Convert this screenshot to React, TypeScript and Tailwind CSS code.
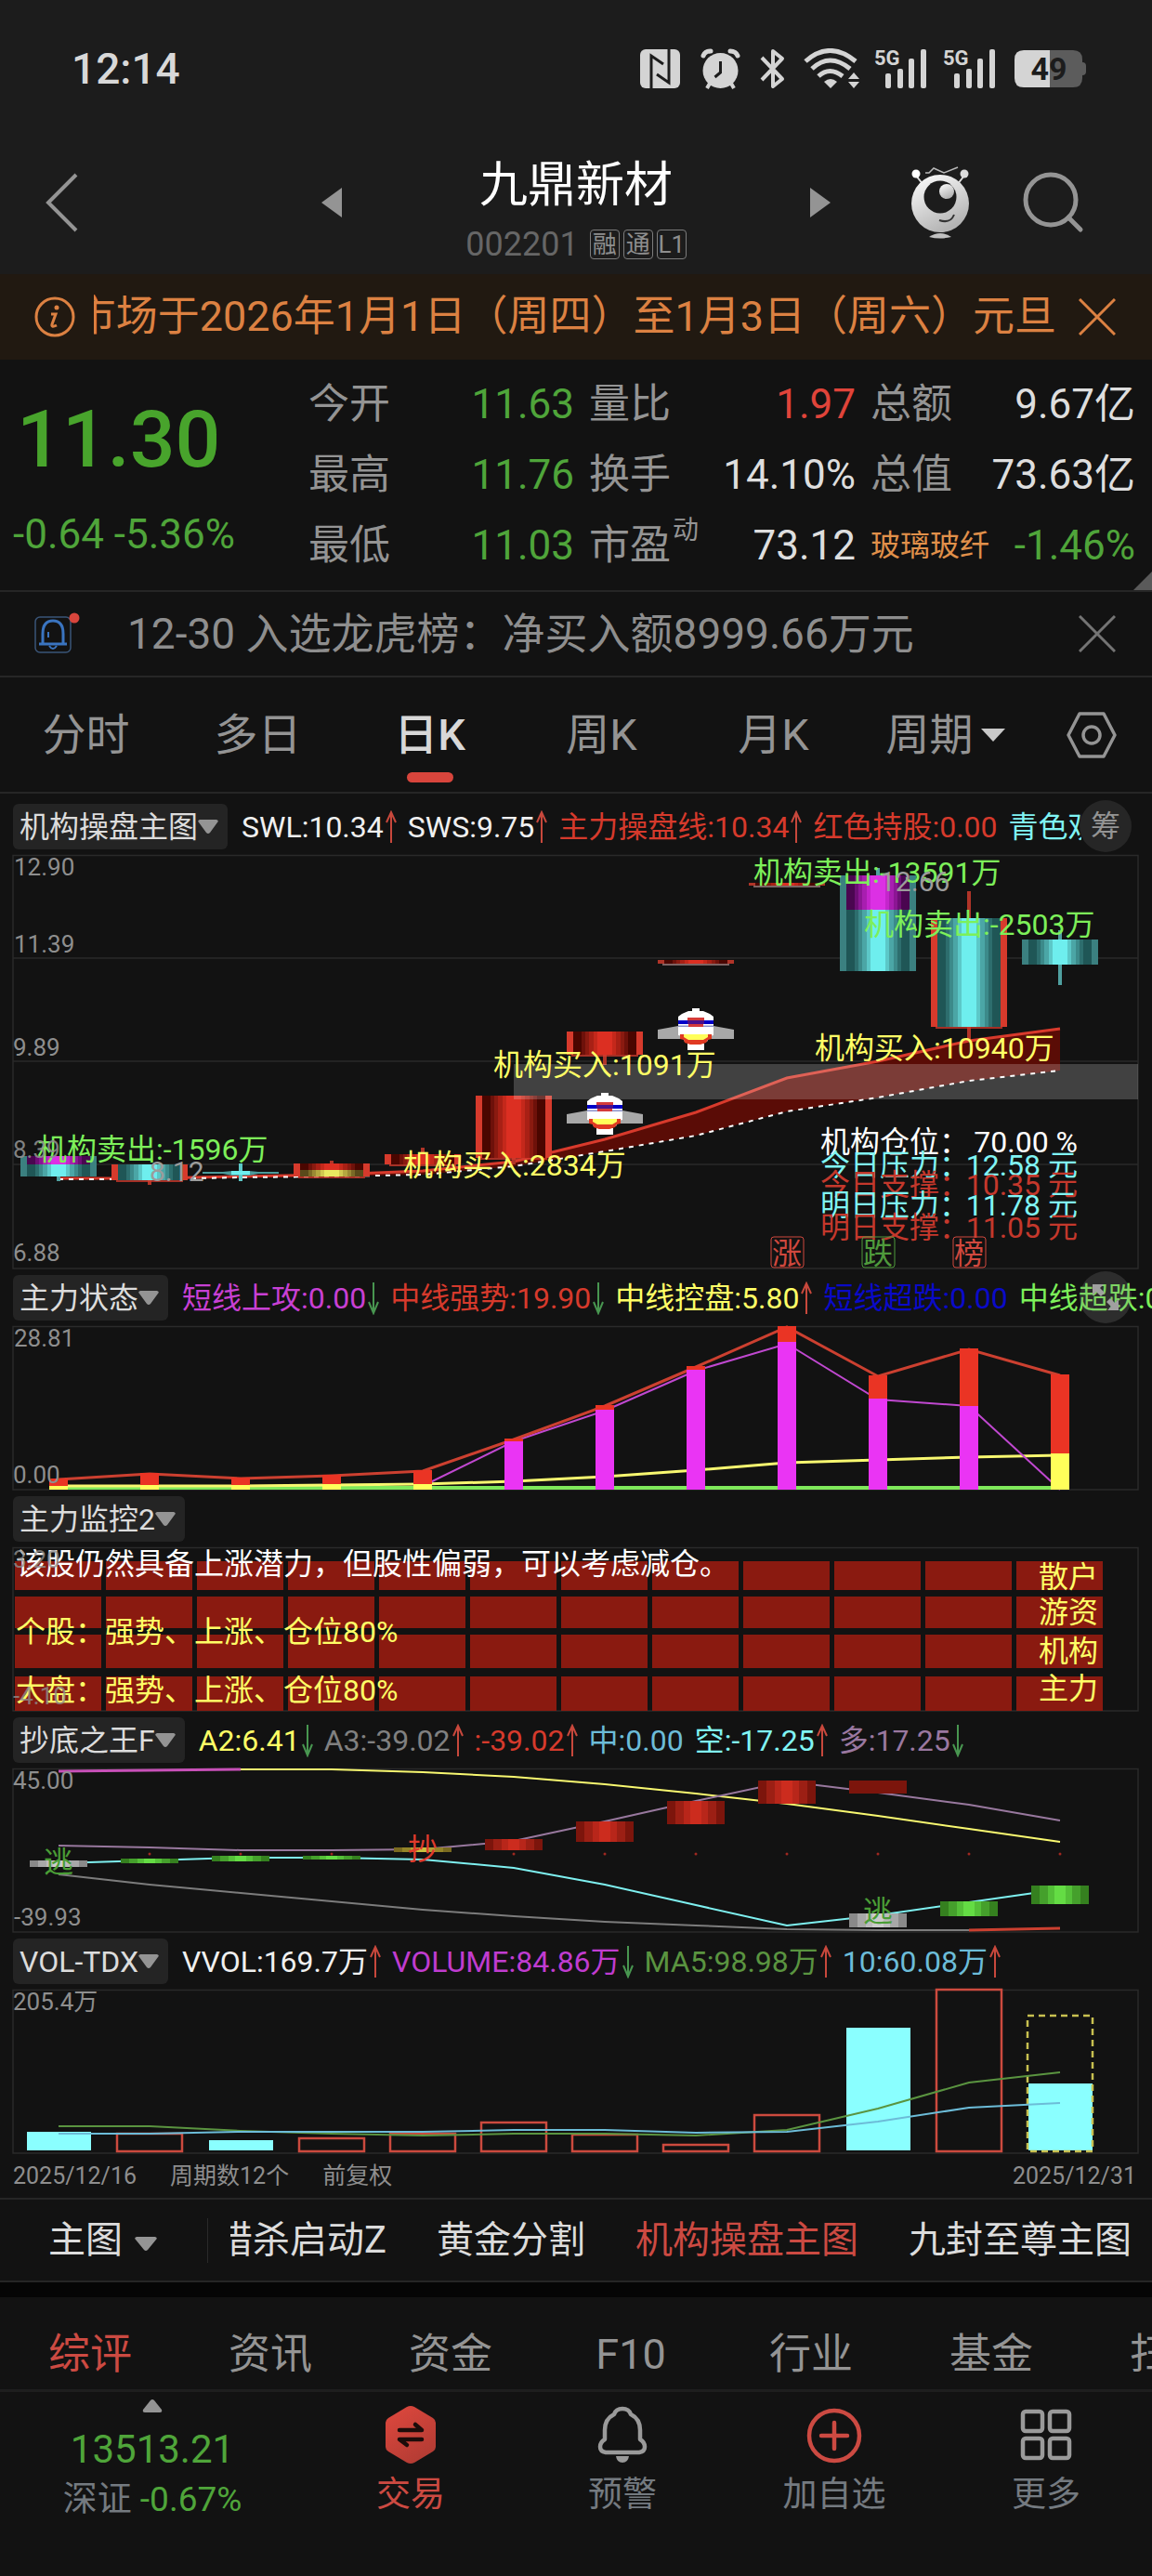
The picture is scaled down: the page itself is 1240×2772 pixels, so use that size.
import React from 'react';

const AXIS = '#8e8e8e';
const GRID = '#2a2a2a';
const LIME = '#7df05a';
const YELLOW = '#ffff66';
const CYAN = '#80f4f4';
const RED = '#d63a2c';

/* ---------- shared pieces ---------- */

const cx = (i: number) => 63 + 98 * i;
const path = (ys: number[], from = 0) => ys.map((y, i) => `${cx(i + from)},${y}`).join(' ');

function Label({ x, y, size = 32, fill = AXIS, anchor = 'start', opacity = 1, children }: {
  x: number; y: number; size?: number; fill?: string; anchor?: 'start' | 'middle' | 'end'; opacity?: number; children: React.ReactNode;
}) {
  return (
    <text x={x} y={y + Math.round(size * 0.36)} fontSize={size} fill={fill} textAnchor={anchor} opacity={opacity}>
      {children}
    </text>
  );
}

function Chart({ height, lines = [], title, children }: { height: number; lines?: number[]; title: string; children: React.ReactNode }) {
  return (
    <svg viewBox={`0 0 1240 ${height}`} className="block h-auto w-full overflow-visible" role="img" aria-label={title}>
      <rect x="14" y="0.5" width="1211" height={height - 1.5} fill="none" stroke={GRID} strokeWidth="1.5" />
      {lines.map((y) => <line key={y} x1="14" x2="1225" y1={y} y2={y} stroke={GRID} strokeWidth="1.5" />)}
      {children}
    </svg>
  );
}

function Trend({ up }: { up: boolean }) {
  return up ? (
    <svg viewBox="0 0 12 36" className="h-9 w-3 shrink-0" fill="none" stroke="#c8483c" strokeWidth="2" aria-label="上升">
      <path d="M6 35V2M1 13L6 2l5 11" />
    </svg>
  ) : (
    <svg viewBox="0 0 12 36" className="h-9 w-3 shrink-0" fill="none" stroke="#489650" strokeWidth="2" aria-label="下降">
      <path d="M6 1v33M1 22l5 12 5-12" />
    </svg>
  );
}

type Reading = { text: string; color: string; up?: boolean };

function PanelHeader({ name, readings, badge, clip }: { name: string; readings: Reading[]; badge?: React.ReactNode; clip?: boolean }) {
  return (
    <div className="relative flex h-[49px] items-center pl-[14px] text-[32px] leading-none whitespace-nowrap">
      <button type="button" className="flex h-full shrink-0 items-center rounded-md bg-[#242424] pr-[10px] pl-[7px] text-[#dcdcdc]">
        {name}
        <svg viewBox="0 0 22 16" className="h-4 w-[22px] shrink-0" fill="#949494"><path d="M2 0h18q3 1 1 3l-8 11q-2 2-4 0L1 3Q-1 1 2 0z" /></svg>
      </button>
      <div className={`ml-[15px] flex h-full min-w-0 flex-1 items-center gap-3 overflow-hidden ${clip ? 'mr-[76px]' : ''}`}>
        {readings.map((r) => (
          <span key={r.text} className="flex shrink-0 items-center gap-0.5" style={{ color: r.color }}>
            {r.text}
            {r.up !== undefined && <Trend up={r.up} />}
          </span>
        ))}
      </div>
      {badge}
    </div>
  );
}

/* ---------- main chart ---------- */

const SHADES: Record<string, string[]> = {
  red: ['#4a0600', '#6e110a', '#8a1a10', '#a82015', '#c4281b', '#dc2f22'],
  teal: ['#1f5656', '#2d6e6e', '#3c8a8a', '#4ba6a6', '#5cc8c8', '#6eeeee'],
  magenta: ['#4a0650', '#6e0e76', '#8c1694', '#a81eb0', '#c426cc', '#dc30e4'],
  olive: ['#5a4a1a', '#7a6a26', '#9a8a34', '#b4a840', '#d0c850', '#e8e860'],
};
const HALVES = [34, 25, 21, 17, 12, 8];

function Stripes({ i, top, bottom, tone }: { i: number; top: number; bottom: number; tone: string }) {
  return (
    <>
      {HALVES.map((h, k) => (
        <rect key={h} x={cx(i) - h} y={top} width={h * 2} height={bottom - top} fill={SHADES[tone][k]} />
      ))}
    </>
  );
}

type CandleData = {
  i: number; top: number; bottom: number; tone: string; edge: string;
  high?: number; low?: number; cap?: { to: number; tone: string };
};

const CANDLES: CandleData[] = [
  { i: 0, top: 324, bottom: 346, tone: 'teal', edge: '#3b8080', low: 351, cap: { to: 333, tone: 'magenta' } },
  { i: 1, top: 333, bottom: 350, tone: 'teal', edge: RED, low: 355 },
  { i: 3, top: 332, bottom: 346, tone: 'olive', edge: RED, high: 329, cap: { to: 339, tone: 'red' } },
  { i: 4, top: 322, bottom: 333, tone: 'red', edge: RED, high: 315 },
  { i: 5, top: 259, bottom: 326, tone: 'red', edge: RED, low: 333 },
  { i: 6, top: 190, bottom: 215, tone: 'red', edge: RED, low: 226 },
  { i: 7, top: 113, bottom: 117, tone: 'red', edge: '#b03428' },
  { i: 8, top: 30, bottom: 33, tone: 'red', edge: '#b03428' },
  { i: 9, top: 22, bottom: 125, tone: 'teal', edge: '#3b8080', high: 14, cap: { to: 59, tone: 'magenta' } },
  { i: 10, top: 68, bottom: 185, tone: 'teal', edge: RED, high: 39, low: 198 },
  { i: 11, top: 91, bottom: 118, tone: 'teal', edge: '#3b8080', high: 81, low: 140 },
];

function Candle(c: CandleData) {
  const wick = c.edge === '#3b8080' ? '#4fa0a0' : '#b03428';
  return (
    <g>
      {c.high !== undefined && <rect x={cx(c.i) - 2} y={c.high} width="4" height={c.top - c.high} fill={wick} />}
      {c.low !== undefined && <rect x={cx(c.i) - 2} y={c.bottom} width="4" height={c.low - c.bottom} fill={wick} />}
      <rect x={cx(c.i) - 41} y={c.top} width="82" height={c.bottom - c.top} fill={c.edge} />
      <Stripes i={c.i} top={c.top} bottom={c.bottom} tone={c.tone} />
      {c.cap && <Stripes i={c.i} top={c.top} bottom={c.cap.to} tone={c.cap.tone} />}
      {c.edge !== '#3b8080' && (
        <line x1={cx(c.i) - 36} x2={cx(c.i) + 36} y1={c.bottom + 1} y2={c.bottom + 1} stroke={c.bottom - c.top < 6 ? '#a08080' : RED} strokeWidth="1.5" />
      )}
    </g>
  );
}

function Ship({ x, y }: { x: number; y: number }) {
  return (
    <g transform={`translate(${x} ${y})`}>
      <path d="M-19 19l-22 4v10h82V23l-22-4z" fill="#a8a8a8" />
      <path d="M-4 0h8v3h4l7 3 4 3v20l-4 1-3 6h-24l-3-6-4-1V9l4-3 7-3h4z" fill="#fff" />
      <path d="M-9 38H9v7H-9z" fill="#fff" />
      <path d="M-9 10H9v3H-9z" fill="#d43a3a" />
      <path d="M-19 13h38v4h-38z" fill="#0000c8" />
      <path d="M-9 13H9v4H-9z" fill="#4a108a" />
      <path d="M-19 18.500h38v1.500h-38z" fill="#8a90c8" />
      <path d="M-8 17H8v3H-8z" fill="#d43a3a" />
      <path d="M-17 28h34v5l-4 1-2 3-6 2H-6l-6-2-1-3-4-1z" fill="#e03a22" />
      <path d="M-13 28h26v3l-5 3H-8l-5-3z" fill="#ffff5a" />
    </g>
  );
}

const LEAD = [348, 348, 346, 344, 340, 330, 306, 277, 240, 222, 200, 187];
const BASE = [349, 349, 347, 346, 344, 335, 319, 302, 276, 261, 243, 232];

const INFO = [
  { y: 308, name: '机构仓位', value: '70.00 %', color: '#ffffff' },
  { y: 333, name: '今日压力', value: '12.58 元', color: CYAN },
  { y: 354, name: '今日支撑', value: '10.35 元', color: '#c4382c' },
  { y: 376, name: '明日压力', value: '11.78 元', color: CYAN },
  { y: 400, name: '明日支撑', value: '11.05 元', color: '#c4382c' },
];

function MainChart() {
  return (
    <Chart height={446} lines={[111, 222, 333]} title="机构操盘主图">
      <Label x={15} y={13} size={26}>12.90</Label>
      <Label x={15} y={96} size={26}>11.39</Label>
      <Label x={14} y={207} size={26}>9.89</Label>
      <Label x={14} y={428} size={26}>6.88</Label>
      <polygon points={`${path(LEAD)} ${path([...BASE]).split(' ').reverse().join(' ')}`} fill="#5a0c06" />
      <polyline points={path(LEAD)} fill="none" stroke="#d83a2c" strokeWidth="3" />
      <polyline points={path(BASE)} fill="none" stroke="#fff" strokeWidth="2" strokeDasharray="5 6" />
      {CANDLES.map((c) => <Candle key={c.i} {...c} />)}
      <path d="M218 341h22l10-1h18l10 1h22v2h-22l-10 2h-18l-10-2h-22z" fill="#4b9a9a" />
      <path d="M257 332h4v19h-4z" fill="#5cc8c8" />
      <path d="M249 340h20v4h-20z" fill="#6eeeee" />
      <rect x="553" y="225" width="672" height="38" fill="#fff" opacity="0.2" />
      <Ship x={651} y={256} />
      <Ship x={749} y={165} />
      <Label x={40} y={316} fill={LIME}>机构卖出:-1596万</Label>
      <Label x={14} y={317} size={26} opacity={0.9}>8.39</Label>
      <Label x={161} y={340} size={30} fill="#9c9c9c">8.12</Label>
      <Label x={434} y={333} fill={YELLOW}>机构买入:2834万</Label>
      <Label x={531} y={225} fill={YELLOW}>机构买入:1091万</Label>
      <Label x={811} y={18} fill={LIME}>机构卖出:-13591万</Label>
      <Label x={947} y={28} size={30} fill="#9c9c9c">12.66</Label>
      <Label x={930} y={74} fill={LIME}>机构卖出:-2503万</Label>
      <Label x={877} y={207} fill={YELLOW}>机构买入:10940万</Label>
      {INFO.map((r) => (
        <g key={r.name}>
          <Label x={883} y={r.y} fill={r.color}>{r.name}：</Label>
          <Label x={1160} y={r.y} fill={r.color} anchor="end">{r.value}</Label>
        </g>
      ))}
      {[
        { i: 8, t: '涨', c: '#d0483e' },
        { i: 9, t: '跌', c: '#4f9a3c' },
        { i: 10, t: '榜', c: '#d0483e' },
      ].map((m) => (
        <g key={m.t}>
          <rect x={cx(m.i) - 17} y="411" width="35" height="33" rx="3" fill="none" stroke={m.c} strokeWidth="1" />
          <Label x={cx(m.i)} y={428} fill={m.c} anchor="middle">{m.t}</Label>
        </g>
      ))}
    </Chart>
  );
}

/* ---------- strength chart ---------- */

const STRENGTH = [
  { top: 164, mid: 172, base: '#ffff5a' }, { top: 158, mid: 171, base: '#ffff5a' }, { top: 163, mid: 171, base: '#ffff5a' },
  { top: 160, mid: 170, base: '#ffff5a' }, { top: 155, mid: 170, base: '#ffff5a' }, { top: 121, mid: 124, base: '#ea34f4' },
  { top: 85, mid: 90, base: '#ea34f4' }, { top: 43, mid: 47, base: '#ea34f4' }, { top: 0, mid: 17, base: '#ea34f4' },
  { top: 53, mid: 78, base: '#ea34f4' }, { top: 24, mid: 86, base: '#ea34f4' }, { top: 52, mid: 137, base: '#ffff5a' },
];

function StrengthChart() {
  return (
    <Chart height={177} title="主力状态">
      <polyline points="63,174 1141,174" stroke="#7fe85a" strokeWidth="4" />
      <polyline points={path([172, 172, 172, 171, 170, 167, 162, 155, 147, 144, 141, 139])} fill="none" stroke="#f8f870" strokeWidth="3" />
      <polyline points={path([172, 124, 91, 48, 19, 79, 86, 176], 4)} fill="none" stroke="#c048d0" strokeWidth="2" />
      <polyline points={path([165, 159, 164, 161, 156, 122, 86, 44, 1, 54, 25, 53])} fill="none" stroke="#cc4030" strokeWidth="3" />
      {STRENGTH.map((b, i) => (
        <g key={i}>
          <rect x={cx(i) - 10} y={b.top} width="20" height={b.mid - b.top} fill="#ea3424" />
          <rect x={cx(i) - 10} y={b.mid} width="20" height={176 - b.mid} fill={b.base} />
        </g>
      ))}
      <Label x={15} y={13} size={26}>28.81</Label>
      <Label x={14} y={160} size={26}>0.00</Label>
    </Chart>
  );
}

/* ---------- monitor chart ---------- */

const BANDS = [[15, 31], [53, 34], [94, 36], [139, 37]];

function MonitorChart() {
  return (
    <Chart height={177} title="主力监控">
      {BANDS.map(([y, h]) => Array.from({ length: 12 }, (_, i) => (
        <rect key={`${y}-${i}`} x={16 + 98 * i} y={y} width="93" height={h} fill="#8a1a10" />
      )))}
      <Label x={17} y={17} fill="#fff">该股仍然具备上涨潜力，但股性偏弱，可以考虑减仓。</Label>
      <Label x={17} y={90} fill={YELLOW}>个股：强势、上涨、仓位80%</Label>
      <Label x={17} y={153} fill={YELLOW}>大盘：强势、上涨、仓位80%</Label>
      <Label x={1118} y={31} fill={YELLOW}>散户</Label>
      <Label x={1118} y={69} fill={YELLOW}>游资</Label>
      <Label x={1118} y={111} fill={YELLOW}>机构</Label>
      <Label x={1118} y={151} fill={YELLOW}>主力</Label>
      <Label x={14} y={13} size={26} opacity={0.8}>3.20</Label>
      <Label x={14} y={160} size={26} opacity={0.8}>-4.10</Label>
    </Chart>
  );
}

/* ---------- bottom-fishing chart ---------- */

const BLOCK_TONES: Record<string, string[]> = {
  gray: ['#8a8a8a', '#a8a8a8', '#bcbcbc', '#cccccc'],
  green: ['#35801f', '#45a02c', '#54c038', '#64dc44'],
  olive: ['#7a6a20', '#948428', '#b0a034', '#c8c040'],
  red: ['#7c150c', '#9c1f14', '#b8261a', '#cc2c1e'],
  dark: ['#7c150c', '#7c150c', '#7c150c', '#7c150c'],
};

const BLOCKS: [number, number, number, string][] = [
  [0, 99, 106, 'gray'], [1, 97, 102, 'green'], [2, 94, 100, 'green'], [3, 94, 98, 'green'], [4, 85, 90, 'olive'],
  [5, 76, 88, 'red'], [6, 57, 79, 'red'], [7, 35, 60, 'red'], [8, 13, 38, 'red'], [9, 13, 27, 'dark'],
  [9, 156, 171, 'gray'], [10, 143, 159, 'green'], [11, 126, 146, 'green'],
];

function FishingChart() {
  return (
    <Chart height={177} title="抄底之王">
      <polyline points={path([114, 125, 134, 143, 152, 159, 165, 169, 173, 174, 174])} fill="none" stroke="#7c7c7c" strokeWidth="2" />
      <polyline points={path([174, 172], 10)} fill="none" stroke="#cc4030" strokeWidth="3" />
      <polyline points={path([1, 1, 4, 9, 17, 27, 38, 51, 65, 79], 2)} fill="none" stroke="#f8f870" strokeWidth="2" />
      <polyline points={path([3, 2, 1])} fill="none" stroke="#c850b8" strokeWidth="3" />
      <polyline points={path([83, 85, 88, 88, 87, 78, 57, 35, 14, 26, 39, 56])} fill="none" stroke="#98789e" strokeWidth="2" />
      <polyline points={path([102, 99, 96, 96, 98, 107, 125, 147, 169, 158, 144, 130])} fill="none" stroke="#7ef0f0" strokeWidth="2" />
      {BLOCKS.map(([i, top, bottom, tone], k) => (
        <g key={k}>
          {[31, 22, 13, 6].map((h, s) => (
            <rect key={h} x={cx(i) - h} y={top} width={h * 2} height={bottom - top} fill={BLOCK_TONES[tone][s]} />
          ))}
        </g>
      ))}
      {[1, 2, 3, 5, 6, 7, 8, 9, 10, 11].map((i) => <circle key={i} cx={cx(i)} cy="92" r="1.500" fill="#a02820" />)}
      <Label x={63} y={100} fill="#4a9e36" anchor="middle">逃</Label>
      <Label x={455} y={86} fill="#e03a2c" anchor="middle">抄</Label>
      <Label x={945} y={153} fill="#4a9e36" anchor="middle">逃</Label>
      <Label x={14} y={13} size={26}>45.00</Label>
      <Label x={15} y={160} size={26}>-39.93</Label>
    </Chart>
  );
}

/* ---------- volume chart ---------- */

const VOLUMES = [
  { y: 153, fill: true }, { y: 155 }, { y: 162, fill: true }, { y: 160 }, { y: 155 }, { y: 143 },
  { y: 156 }, { y: 167 }, { y: 135 }, { y: 41, fill: true }, { y: 0 }, { y: 101, fill: true },
];

function VolumeChart() {
  return (
    <Chart height={177} title="成交量">
      {VOLUMES.map((v, i) => v.fill
        ? <rect key={i} x={cx(i) - 34} y={v.y} width="69" height={173 - v.y} fill="#8affff" />
        : <rect key={i} x={cx(i) - 35} y={v.y} width="70" height={174 - v.y} fill="none" stroke="#cc4a3e" strokeWidth="2.500" />)}
      <rect x={cx(11) - 35} y="28" width="70" height="146" fill="none" stroke="#c8c050" strokeWidth="2.500" strokeDasharray="7 5" />
      <polyline points={path([147, 147, 152, 155, 157, 155, 155, 157, 151, 128, 100, 89])} fill="none" stroke="#5a9440" strokeWidth="2" />
      <polyline points={path([155, 155, 153, 153, 153, 151, 151, 154, 153, 142, 127, 122])} fill="none" stroke="#6cbcd8" strokeWidth="2" />
      <Label x={14} y={13} size={26}>205.4万</Label>
    </Chart>
  );
}

/* ---------- status bar icons ---------- */

function Signal() {
  return (
    <svg viewBox="0 0 58 44" className="h-11 w-[58px] overflow-visible" fill="#d4d4d4" aria-label="5G 信号">
      <text x="0" y="18" fontSize="22" fontWeight="700">5G</text>
      <rect x="12" y="27" width="6" height="16" rx="2" />
      <rect x="25" y="22" width="6" height="21" rx="2" />
      <rect x="37" y="11" width="6" height="32" rx="2" />
      <rect x="50" y="1" width="6" height="42" rx="2" />
    </svg>
  );
}

function StatusBar() {
  return (
    <div className="flex h-[148px] items-center justify-between pr-[71px] pl-[77px]">
      <time className="text-[46px] leading-none font-medium text-[#d8d8d8]">12:14</time>
      <div className="flex items-center">
        <svg viewBox="0 0 43 42" className="mr-[22px] h-[42px] w-[43px]" aria-label="NFC">
          <rect width="43" height="42" rx="6" fill="#d4d4d4" />
          <path d="M12 42V7l13 9M31 0v36L18 27" fill="none" stroke="#1c1c1c" strokeWidth="3" />
        </svg>
        <svg viewBox="0 0 43 44" className="mr-[21px] h-11 w-[43px]" aria-label="闹钟">
          <path d="M3 8Q5 3 11 3M32 3q6 0 8 5" fill="none" stroke="#d4d4d4" strokeWidth="5" strokeLinecap="round" />
          <path d="M11 36l-4 7M32 36l4 7" stroke="#d4d4d4" strokeWidth="4" />
          <circle cx="21.500" cy="24" r="19" fill="#d4d4d4" />
          <path d="M21.500 14v12l-6 5" fill="none" stroke="#1c1c1c" strokeWidth="3" />
        </svg>
        <svg viewBox="0 0 27 44" className="mr-5 h-11 w-[27px]" fill="none" stroke="#d4d4d4" strokeWidth="4" aria-label="蓝牙">
          <path d="M2 10l22 23-10 8V3l10 8L2 34" strokeLinejoin="round" />
        </svg>
        <svg viewBox="0 0 60 44" className="mr-4 h-11 w-[60px]" aria-label="无线网络">
          <g fill="none" stroke="#d4d4d4" strokeWidth="5">
            <path d="M2 14Q28-9 56 14" /><path d="M9 22Q28 4 50 22" /><path d="M16 30q12-11 26 0" />
          </g>
          <path d="M22 36q7-6 14 0l-7 7z" fill="#d4d4d4" />
          <path d="M48 33l6-7 6 7zM48 36h12l-6 7z" fill="#d4d4d4" />
        </svg>
        <div className="mr-4"><Signal /></div>
        <div className="mr-[19px]"><Signal /></div>
        <svg viewBox="0 0 77 40" className="h-10 w-[77px]" aria-label="电量 49%">
          <path d="M38 0h25q10 0 10 10v3q4 0 4 4v6q0 4-4 4v3q0 10-10 10H38z" fill="#5c5c5c" />
          <path d="M10 0h28v40H10Q0 40 0 30V10Q0 0 10 0z" fill="#d4d4d4" />
          <text x="37" y="32" fontSize="34" fontWeight="700" fill="#1c1c1c" textAnchor="middle">49</text>
        </svg>
      </div>
    </div>
  );
}

/* ---------- header ---------- */

function TitleBar() {
  return (
    <div className="grid h-[147px] grid-cols-[1fr_504px_1fr] items-center pb-2">
      <div className="flex items-center justify-between pl-12">
        <button type="button" aria-label="返回">
          <svg viewBox="0 0 36 64" className="h-16 w-9" fill="none" stroke="#949494" strokeWidth="4"><path d="M34 2L4 32l30 30" /></svg>
        </button>
        <button type="button" aria-label="上一只">
          <svg viewBox="0 0 22 32" className="h-8 w-[22px]" fill="#949494"><path d="M22 0v32L0 16z" /></svg>
        </button>
      </div>
      <div className="mt-4 flex flex-col items-center gap-[18px]">
        <h1 className="text-[52px] leading-[56px] text-white">九鼎新材</h1>
        <div className="flex h-[34px] items-center gap-1 text-[26px] leading-none text-[#8e8e8e]">
          <span className="mr-2 text-[36px] text-[#666666]">002201</span>
          {['融', '通', 'L1'].map((t) => (
            <span key={t} className="flex size-8 items-center justify-center rounded border border-[#7c7c7c]">{t}</span>
          ))}
        </div>
      </div>
      <div className="flex items-center justify-between pr-[73px]">
        <button type="button" aria-label="下一只">
          <svg viewBox="0 0 22 32" className="h-8 w-[22px]" fill="#949494"><path d="M0 0v32l22-16z" /></svg>
        </button>
        <div className="flex items-center gap-[57px]">
          <button type="button" aria-label="智能助手">
            <svg viewBox="0 0 64 78" className="h-[78px] w-16">
              <defs>
                <linearGradient id="bot" x1="0" y1="0" x2="0.5" y2="1"><stop offset="0" stopColor="#fff" /><stop offset="1" stopColor="#b4b4b4" /></linearGradient>
              </defs>
              <path d="M16 7h4l5-5 11 5L51 1" fill="none" stroke="#b8b8b8" strokeWidth="1.500" />
              <path d="M6 10l8 10M58 10l-8 10" stroke="#e0e0e0" strokeWidth="2" />
              <circle cx="6" cy="8" r="4.500" fill="#fff" />
              <circle cx="58" cy="8" r="4.500" fill="#ddd" />
              <circle cx="32" cy="40" r="31" fill="url(#bot)" />
              <circle cx="32" cy="33" r="17.500" fill="#1c1c1c" />
              <circle cx="39" cy="27" r="8" fill="url(#bot)" />
              <path d="M31 58q12 4 16-6" fill="none" stroke="#333" strokeWidth="2" />
              <path d="M20 76q12-8 24 0-12 3-24 0z" fill="#c0c0c0" />
            </svg>
          </button>
          <button type="button" aria-label="搜索">
            <svg viewBox="0 0 66 66" className="size-[66px]" fill="none" stroke="#949494" strokeWidth="5">
              <circle cx="30" cy="30" r="27" /><path d="M49 49l13 13" strokeLinecap="round" />
            </svg>
          </button>
        </div>
      </div>
    </div>
  );
}

function Close({ className }: { className: string }) {
  return (
    <button type="button" aria-label="关闭" className={className}>
      <svg viewBox="0 0 40 40" className="size-10" fill="none" stroke="currentColor" strokeWidth="3"><path d="M1 1l38 38M39 1L1 39" /></svg>
    </button>
  );
}

/* ---------- quote ---------- */

const QUOTES: { label: React.ReactNode; value: string; tone: string; small?: boolean }[][] = [
  [
    { label: '今开', value: '11.63', tone: 'text-[#4fa53a]' },
    { label: '最高', value: '11.76', tone: 'text-[#4fa53a]' },
    { label: '最低', value: '11.03', tone: 'text-[#4fa53a]' },
  ],
  [
    { label: '量比', value: '1.97', tone: 'text-[#e0443a]' },
    { label: '换手', value: '14.10%', tone: 'text-[#dedede]' },
    { label: <>市盈<sup className="-top-2 ml-0.5 self-start text-[28px] leading-none">动</sup></>, value: '73.12', tone: 'text-[#dedede]' },
  ],
  [
    { label: '总额', value: '9.67亿', tone: 'text-[#dedede]' },
    { label: '总值', value: '73.63亿', tone: 'text-[#dedede]' },
    { label: '玻璃玻纤', value: '-1.46%', tone: 'text-[#4fa53a]', small: true },
  ],
];

function Quote() {
  return (
    <section className="relative grid grid-cols-[332fr_302fr_303fr_303fr] items-center border-b-2 border-[#262626] pt-2.5 pb-2.5 text-[#4fa53a]">
      <div className="flex flex-col gap-8 whitespace-nowrap">
        <strong className="pl-[18px] text-[86px] leading-[96px] font-medium text-[#48a42c]">11.30</strong>
        <p className="pl-[14px] text-[44px] leading-[44px]">-0.64 -5.36%</p>
      </div>
      {QUOTES.map((col, i) => (
        <dl key={i} className={i === 2 ? 'pr-[18px]' : 'pr-[16px]'}>
          {col.map((q) => (
            <div key={q.value} className="flex h-[76px] items-center justify-between text-[44px] leading-none whitespace-nowrap">
              <dt className={q.small ? 'text-[32px] text-[#e0904a]' : 'flex text-[#949494]'}>{q.label}</dt>
              <dd className={q.tone}>{q.value}</dd>
            </div>
          ))}
        </dl>
      ))}
      <span className="absolute right-0 bottom-0 size-5 bg-[#5a5a5a] [clip-path:polygon(100%_0,100%_100%,0_100%)]" />
    </section>
  );
}

/* ---------- period tabs ---------- */

const PERIODS = ['分时', '多日', '日K', '周K', '月K'];

function PeriodTabs() {
  return (
    <nav className="grid h-[125px] grid-cols-[repeat(6,185fr)_130fr] border-b-2 border-[#262626] text-[47px] leading-none text-[#949494]">
      {PERIODS.map((p) => (
        <button key={p} type="button" className={p === '日K' ? 'relative font-medium text-[#d8d8d8]' : 'relative'}>
          {p}
          {p === '日K' && <span className="absolute bottom-[10px] left-1/2 h-[11px] w-[50px] -translate-x-1/2 rounded-full bg-[#d8453c]" />}
        </button>
      ))}
      <button type="button" className="flex items-center justify-center gap-2">
        周期
        <svg viewBox="0 0 26 14" className="h-3.5 w-[26px]" fill="#c8c8c8"><path d="M0 0h26L13 14z" /></svg>
      </button>
      <button type="button" aria-label="设置" className="flex items-center justify-center">
        <svg viewBox="0 0 54 50" className="h-[50px] w-[54px]" fill="none" stroke="#949494" strokeWidth="3.500">
          <path d="M14 2h26l12 23-12 23H14L2 25z" strokeLinejoin="round" /><circle cx="27" cy="25" r="9" />
        </svg>
      </button>
    </nav>
  );
}

/* ---------- bottom navigation ---------- */

function NavItem({ label, active, children }: { label: string; active?: boolean; children: React.ReactNode }) {
  return (
    <button type="button" className={`flex flex-col items-center gap-3 pt-[15px] text-[37px] leading-[44px] ${active ? 'text-[#cc4a42]' : 'text-[#747a80]'}`}>
      <svg viewBox="0 0 62 62" className="size-[62px]">{children}</svg>
      {label}
    </button>
  );
}

function BottomNav() {
  return (
    <nav className="grid grid-cols-[328fr_228fr_228fr_228fr_228fr] items-start border-t-[3px] border-[#1e1e1e]">
      <button type="button" className="flex flex-col items-center pt-2 text-[#4fa53a]">
        <svg viewBox="0 0 22 14" className="h-3.5 w-[22px]" fill="#949494"><path d="M11 0q1 0 2 1l8 10q1 3-2 3H3q-3 0-2-3L9 1q1-1 2-1z" /></svg>
        <span className="mt-4 text-[42px] leading-[48px]">13513.21</span>
        <span className="mt-2 text-[37px] leading-[44px]"><span className="text-[#747a80]">深证 </span>-0.67%</span>
      </button>
      <NavItem label="交易" active>
        <defs>
          <linearGradient id="trade" x1="0" y1="0" x2="0.6" y2="1"><stop offset="0" stopColor="#e0483e" /><stop offset="1" stopColor="#b43c34" /></linearGradient>
        </defs>
        <path d="M27 1q4-2 8 0l20 12q3 2 3 5v26q0 3-3 5L35 61q-4 2-8 0L7 49q-3-2-3-5V18q0-3 3-5z" fill="url(#trade)" />
        <path d="M19 26h24L36 20M43 36H19l8 6" fill="none" stroke="#1c0c0a" strokeWidth="4.500" strokeLinecap="round" strokeLinejoin="round" />
      </NavItem>
      <NavItem label="预警">
        <path d="M31 3q-7 0-9 6Q12 14 12 26v10q-5 3-5 8t6 6h36q6-1 6-6t-5-8V26q0-12-10-17-2-6-9-6z" fill="none" stroke="#9a9a9a" strokeWidth="4.500" strokeLinejoin="round" />
        <path d="M24 54h14q-1 7-7 7t-7-7z" fill="#9a9a9a" />
      </NavItem>
      <NavItem label="加自选">
        <circle cx="31" cy="32" r="27" fill="none" stroke="#cc4a42" strokeWidth="4.500" />
        <path d="M31 18v28M17 32h28" stroke="#cc4a42" strokeWidth="4.500" strokeLinecap="round" />
      </NavItem>
      <NavItem label="更多">
        <g fill="none" stroke="#9a9a9a" strokeWidth="4.500">
          <rect x="6" y="6" width="21" height="21" rx="3" /><rect x="35" y="6" width="21" height="21" rx="3" />
          <rect x="6" y="35" width="21" height="21" rx="3" /><rect x="35" y="35" width="21" height="21" rx="3" />
        </g>
      </NavItem>
    </nav>
  );
}

/* ---------- page ---------- */

export default function App() {
  return (
    <main className="min-h-screen overflow-x-hidden bg-[#121212] font-['Roboto','Noto_Sans_CJK_SC',sans-serif]" lang="zh-CN">
      <header className="bg-[#1c1c1c]">
        <StatusBar />
        <TitleBar />
      </header>

      <div className="flex h-[92px] items-center bg-[#211911] pr-[39px] pl-[37px] text-[#dc8142]">
        <svg viewBox="0 0 44 44" className="mr-5 size-11 shrink-0" fill="none" stroke="currentColor" strokeWidth="3">
          <circle cx="22" cy="22" r="20" />
          <circle cx="24" cy="12" r="2.500" fill="currentColor" stroke="none" />
          <path d="M18 19h5l-4 11q-1 4 5 1" />
        </svg>
        <div className="flex min-w-0 flex-1 justify-end overflow-hidden">
          <p className="shrink-0 text-[45px] leading-[60px] whitespace-nowrap">市场于2026年1月1日（周四）至1月3日（周六）元旦</p>
        </div>
        <Close className="ml-6" />
      </div>

      <Quote />

      <div className="flex h-[92px] items-center border-b-2 border-[#262626] pr-[39px] pl-[37px] text-[#8e8e8e]">
        <svg viewBox="0 0 50 50" className="mr-[50px] size-[50px] shrink-0" fill="none" stroke="#3a74c0">
          <rect x="1" y="7" width="38" height="38" rx="5" strokeWidth="1.500" stroke="#3a5578" />
          <path d="M9 36V25q0-14 11-14t11 14v11M5 36h30" strokeWidth="3" />
          <path d="M16 38q4 6 8 0M15 23v6" strokeWidth="2" />
          <circle cx="43" cy="8" r="5.500" fill="#d8453c" stroke="none" />
        </svg>
        <p className="flex-1 text-[46px] leading-none whitespace-nowrap">12-30 入选龙虎榜：净买入额8999.66万元</p>
        <Close className="text-[#747474]" />
      </div>

      <PeriodTabs />

      <section className="flex flex-col gap-1.5 pt-[11px]">
        <PanelHeader
          name="机构操盘主图"
          clip
          readings={[
            { text: 'SWL:10.34', color: '#f0f0f0', up: true },
            { text: 'SWS:9.75', color: '#f0f0f0', up: true },
            { text: '主力操盘线:10.34', color: RED, up: true },
            { text: '红色持股:0.00', color: RED },
            { text: '青色观望:0.00', color: CYAN },
          ]}
          badge={<button type="button" className="absolute top-[-4px] right-[22px] size-14 rounded-full bg-[#262626] text-[#949494]">筹</button>}
        />
        <MainChart />
        <PanelHeader
          name="主力状态"
          readings={[
            { text: '短线上攻:0.00', color: '#c840d4', up: false },
            { text: '中线强势:19.90', color: RED, up: false },
            { text: '中线控盘:5.80', color: YELLOW, up: true },
            { text: '短线超跌:0.00', color: '#0a0ac8' },
            { text: '中线超跌:0.00', color: LIME },
          ]}
          badge={(
            <button type="button" aria-label="全屏" className="absolute top-[-4px] right-[22px] flex size-14 items-center justify-center rounded-full bg-[#808080]/25">
              <svg viewBox="0 0 30 30" className="size-[30px]" fill="#a0a0a0"><path d="M1 1h12l-4 4 5 5-4 4-5-5-4 4zM29 29H17l4-4-5-5 4-4 5 5 4-4z" /></svg>
            </button>
          )}
        />
        <StrengthChart />
        <PanelHeader name="主力监控2" readings={[]} />
        <MonitorChart />
        <PanelHeader
          name="抄底之王F"
          readings={[
            { text: 'A2:6.41', color: YELLOW, up: false },
            { text: 'A3:-39.02', color: '#808080', up: true },
            { text: ':-39.02', color: RED, up: true },
            { text: '中:0.00', color: '#6cbcd8' },
            { text: '空:-17.25', color: CYAN, up: true },
            { text: '多:17.25', color: '#9a78a0', up: false },
          ]}
        />
        <FishingChart />
        <PanelHeader
          name="VOL-TDX"
          readings={[
            { text: 'VVOL:169.7万', color: '#f0f0f0', up: true },
            { text: 'VOLUME:84.86万', color: '#c03cd0', up: false },
            { text: 'MA5:98.98万', color: '#5a9440', up: true },
            { text: '10:60.08万', color: '#6cbcd8', up: true },
          ]}
        />
        <VolumeChart />
      </section>

      <div className="flex h-[49px] items-center gap-9 border-b-2 border-[#262626] pr-[17px] pl-[14px] text-[25px] leading-none text-[#8e8e8e]">
        <span>2025/12/16</span>
        <span>周期数12个</span>
        <span>前复权</span>
        <span className="ml-auto">2025/12/31</span>
      </div>

      <div className="flex h-[89px] items-center border-b-2 border-[#262626] text-[40px] leading-[48px] whitespace-nowrap text-[#dcdcdc]">
        <button type="button" className="flex shrink-0 items-center gap-[13px] pl-[52px]">
          主图
          <svg viewBox="0 0 24 16" className="mt-2 h-4 w-6" fill="#949494"><path d="M2 0h20q3 1 1 3l-9 11q-2 2-4 0L1 3Q-1 1 2 0z" /></svg>
        </button>
        <span className="ml-[54px] h-12 w-px shrink-0 bg-[#2a2a2a]" />
        <div className="ml-[24px] min-w-0 flex-1 overflow-hidden">
          <div className="-ml-4 flex gap-[54px]">
            <button type="button" className="shrink-0">猎杀启动Z</button>
            <button type="button" className="shrink-0">黄金分割</button>
            <button type="button" className="shrink-0 text-[#cc4a42]">机构操盘主图</button>
            <button type="button" className="shrink-0">九封至尊主图</button>
          </div>
        </div>
      </div>
      <div className="h-4 bg-[#050505]" />

      <nav className="flex h-[99px] items-center overflow-hidden pt-6 text-[45px] leading-none whitespace-nowrap text-[#949494]">
        {['综评', '资讯', '资金', 'F10', '行业', '基金', '扫雷'].map((t, i) => (
          <button key={t} type="button" className={`w-[194px] shrink-0 ${i === 0 ? 'text-[#cc4a42]' : ''}`}>{t}</button>
        ))}
      </nav>

      <BottomNav />
    </main>
  );
}
